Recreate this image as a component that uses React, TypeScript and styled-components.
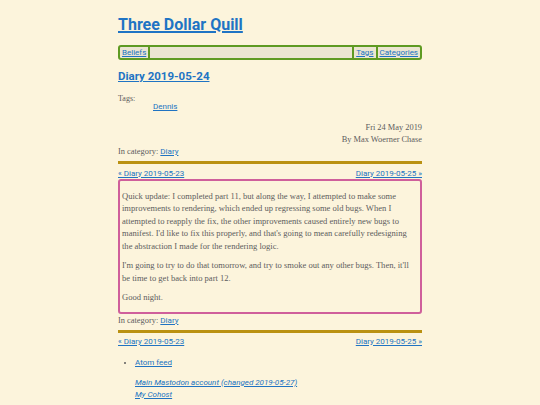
import styled, { createGlobalStyle } from 'styled-components'

const GlobalStyle = createGlobalStyle`
  body {
    margin: 0;
    background: #fcf4dc;
    color: #5c5c5c;
    font-family: 'Liberation Serif', 'DejaVu Serif', serif;
  }
`

const Page = styled.div`
  width: 304px;
  margin: 0 auto;
  padding-top: 14px;
`

const Link = styled.a`
  color: #2073c2;
  text-decoration: underline;
  font-family: 'Roboto', 'Liberation Sans', sans-serif;
  font-size: 8px;
`

const SiteTitle = styled.h1`
  margin: 0 0 9px;
  font-family: 'Roboto', 'Liberation Sans', sans-serif;
  font-size: 16px;
  font-weight: 700;
  line-height: 22px;
  a {
    font-size: 16px;
    color: #1f74c4;
    text-decoration-thickness: 2px;
  }
`

const NavBar = styled.nav`
  display: flex;
  align-items: center;
  height: 11px;
  background: #ebe5d1;
  border: 2px solid #5e9a22;
  border-radius: 3px;
`

const NavItem = styled(Link)`
  padding: 0 2px;
  line-height: 11px;
`

const NavSep = styled.span`
  width: 2px;
  height: 11px;
  background: #5e9a22;
`

const NavSpacer = styled.span`
  flex: 1;
`

const PostTitle = styled.h2`
  margin: 8px 0 11px;
  font-family: 'Roboto', 'Liberation Sans', sans-serif;
  font-size: 11.5px;
  font-weight: 700;
  line-height: 16px;
  a {
    font-size: 11.5px;
    color: #1f74c4;
  }
`

const TagList = styled.dl`
  margin: 0 0 11px;
  font-size: 8px;
  line-height: 8px;
  dd {
    margin: 0 0 0 35px;
  }
`

const Meta = styled.div`
  text-align: right;
  font-size: 8.4px;
  line-height: 12px;
`

const Category = styled.p<{ $gap?: number }>`
  margin: ${({ $gap = 0 }) => $gap}px 0 0;
  font-size: 8.4px;
  line-height: 12px;
`

const Rule = styled.hr`
  margin: 3px 0 3.5px;
  border: 0;
  height: 3px;
  background: #ba9112;
`

const PostNav = styled.div`
  display: flex;
  justify-content: space-between;
  font-size: 8px;
  line-height: 12px;
`

const Article = styled.article`
  margin-top: -1px;
  padding: 9px 2px 8px;
  border: 2px solid #cf5f9b;
  border-radius: 3px;
  p {
    margin: 0 0 7px;
    font-size: 8.55px;
    line-height: 12.5px;
  }
  p:last-child {
    margin-bottom: 0;
  }
`

const Footer = styled.footer`
  margin-top: 9px;
  font-size: 8px;
  line-height: 12px;
  ul {
    margin: 0;
    padding-left: 17px;
  }
`

const Social = styled.div`
  margin-top: 8px;
  padding-left: 17px;
  font-style: italic;
  a {
    display: block;
  }
`

export default function App() {
  return (
    <>
      <GlobalStyle />
      <Page>
        <SiteTitle>
          <Link href="#">Three Dollar Quill</Link>
        </SiteTitle>
        <NavBar>
          <NavItem href="#">Beliefs</NavItem>
          <NavSep />
          <NavSpacer />
          <NavSep />
          <NavItem href="#">Tags</NavItem>
          <NavSep />
          <NavItem href="#">Categories</NavItem>
        </NavBar>
        <PostTitle>
          <Link href="#">Diary 2019-05-24</Link>
        </PostTitle>
        <TagList>
          <dt>Tags:</dt>
          <dd>
            <Link href="#">Dennis</Link>
          </dd>
        </TagList>
        <Meta>
          Fri 24 May 2019
          <br />
          By Max Woerner Chase
        </Meta>
        <Category>
          In category: <Link href="#">Diary</Link>
        </Category>
        <Rule />
        <PostNav>
          <Link href="#">« Diary 2019-05-23</Link>
          <Link href="#">Diary 2019-05-25 »</Link>
        </PostNav>
        <Article>
          <p>
            Quick update: I completed part 11, but along the way, I attempted to make some
            improvements to rendering, which ended up regressing some old bugs. When I
            attempted to reapply the fix, the other improvements caused entirely new bugs to
            manifest. I'd like to fix this properly, and that's going to mean carefully
            redesigning the abstraction I made for the rendering logic.
          </p>
          <p>
            I'm going to try to do that tomorrow, and try to smoke out any other bugs. Then,
            it'll be time to get back into part 12.
          </p>
          <p>Good night.</p>
        </Article>
        <Category $gap={1}>
          In category: <Link href="#">Diary</Link>
        </Category>
        <Rule />
        <PostNav>
          <Link href="#">« Diary 2019-05-23</Link>
          <Link href="#">Diary 2019-05-25 »</Link>
        </PostNav>
        <Footer>
          <ul>
            <li>
              <Link href="#">Atom feed</Link>
            </li>
          </ul>
          <Social>
            <Link href="#">Main Mastodon account (changed 2019-05-27)</Link>
            <Link href="#">My Cohost</Link>
          </Social>
        </Footer>
      </Page>
    </>
  )
}
